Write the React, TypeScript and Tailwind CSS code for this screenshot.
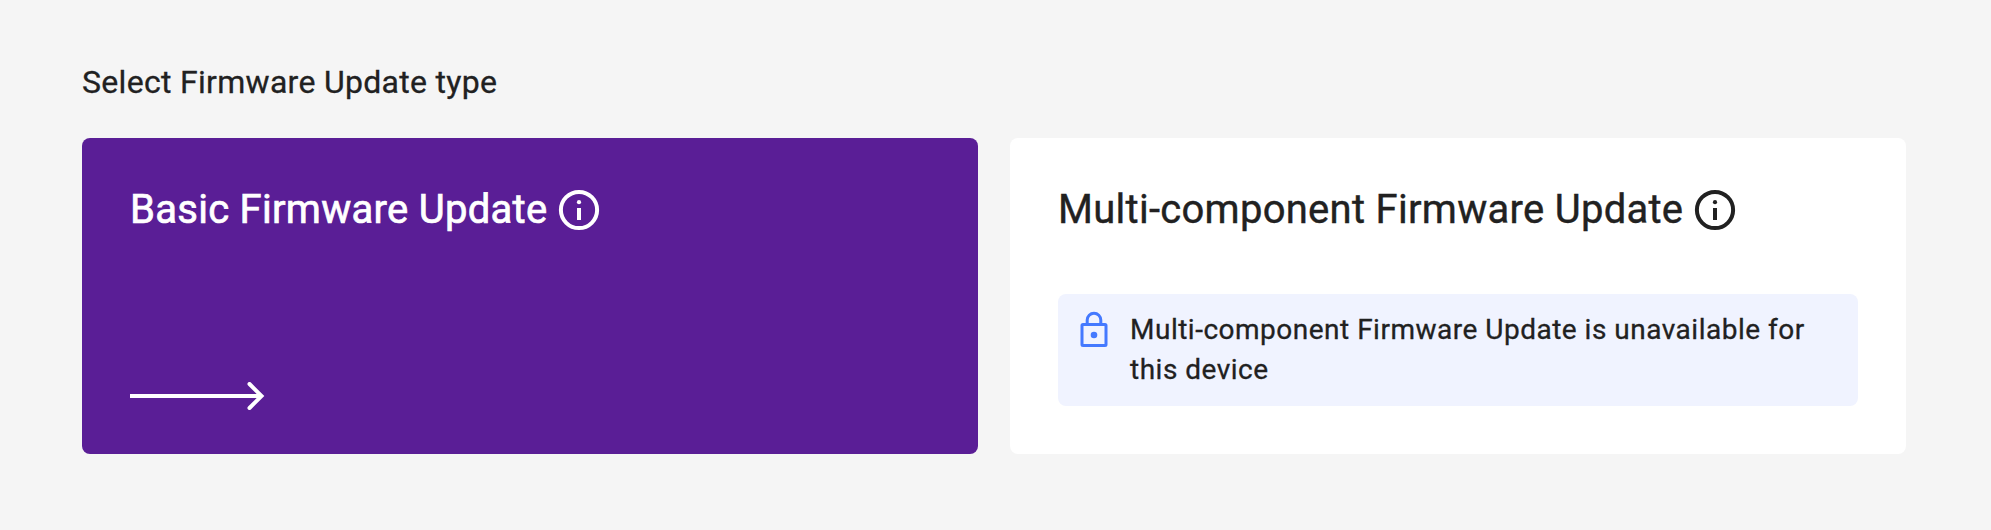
const Info = () => (
  <svg viewBox="0 0 48 48" className="h-12 w-12 shrink-0" fill="none">
    <circle cx="24" cy="24" r="18.1" stroke="currentColor" strokeWidth="4" />
    <circle cx="24" cy="16.2" r="2.1" fill="currentColor" />
    <path d="M22 22h4v12h-4z" fill="currentColor" />
  </svg>
);

export default function App() {
  return (
    <main className="h-[530px] bg-[#f5f5f5] px-[82px] pt-[58px] font-[Roboto,sans-serif] text-[#212121]">
      <h1 className="h-12 text-[32px] leading-[48px] tracking-[0.3px] [-webkit-text-stroke:0.3px_currentColor]">Select Firmware Update type</h1>
      <div className="mt-8 grid h-[316px] w-[1824px] grid-cols-2 gap-8">
        <section className="flex flex-col justify-between rounded-lg bg-[#5a1e96] px-12 pt-12 pb-11 text-white">
          <h2 className="flex h-12 items-center gap-2 text-[40px] leading-[48px] tracking-[0.28px] [-webkit-text-stroke:0.7px_currentColor]">Basic Firmware Update <Info /></h2>
          <svg viewBox="0 0 136 28" className="h-7 w-[136px]" fill="none" stroke="currentColor" strokeWidth="4">
            <path d="M0 14H132" />
            <path d="M119.500 2l12 12-12 12" strokeLinecap="round" />
          </svg>
        </section>
        <section className="rounded-lg bg-white px-12 pt-12">
          <h2 className="flex h-12 items-center gap-2 text-[40px] leading-[48px] tracking-[0.28px] [-webkit-text-stroke:0.4px_currentColor]">Multi-component Firmware Update <Info /></h2>
          <div className="mt-[60px] flex h-28 rounded-lg bg-[#f0f3ff] px-5 pt-4">
            <svg viewBox="0 0 32 40" className="h-10 w-8 shrink-0" fill="none" stroke="#4479ff" strokeWidth="3">
              <rect x="4" y="14.500" width="24" height="21" rx="1" />
              <path d="M9.200 14V10a6.800 6.800 0 0 1 13.600 0v4" />
              <circle cx="16" cy="25" r="3.300" fill="#4479ff" stroke="none" />
            </svg>
            <p className="ml-5 text-[28px] leading-10 tracking-[0.5px] [-webkit-text-stroke:0.3px_currentColor]">Multi-component Firmware Update is unavailable for<br />this device</p>
          </div>
        </section>
      </div>
    </main>
  );
}
